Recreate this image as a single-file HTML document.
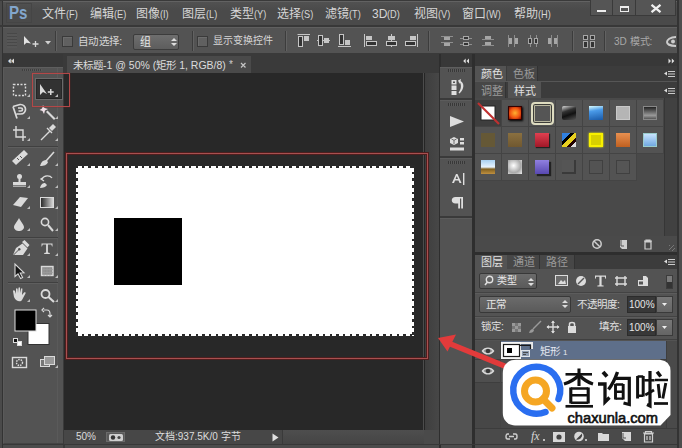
<!DOCTYPE html>
<html lang="zh-CN">
<head>
<meta charset="utf-8">
<style>
*{margin:0;padding:0;box-sizing:border-box}
html,body{width:682px;height:448px;overflow:hidden;background:#4c4c4c}
body{position:relative;font-family:"Liberation Sans",sans-serif;color:#d6d6d6;font-size:12px}
.a{position:absolute}
.t{position:absolute;white-space:nowrap;line-height:1}
</style>
</head>
<body>
<!-- frame -->

<div class="a" style="left:0;top:0;width:2px;height:448px;background:#4a4a4a"></div><div class="a" style="left:2px;top:0;width:1px;height:448px;background:#333"></div>
<!-- menu bar -->
<div class="a" style="left:3px;top:1px;width:674px;height:24px;background:linear-gradient(#525252,#4a4a4a 40%)"></div>
<div class="a" style="left:0;top:0;width:682px;height:1px;background:#3a3a3a"></div>
<div class="a" style="left:3px;top:1px;width:674px;height:1px;background:#626262"></div>
<div class="a" style="left:0;top:25px;width:682px;height:2px;background:#383838"></div>
<svg class="a" style="left:0;top:0" width="40" height="26"><rect x="6.5" y="3.5" width="25" height="19" fill="none" stroke="#454545"/><text x="9" y="19" font-family="Liberation Sans" font-weight="bold" font-size="17.5" fill="#82a6cc" textLength="18.5" lengthAdjust="spacingAndGlyphs">Ps</text></svg>
<div class="t" style="left:42px;top:8px">文件<span style="display:inline-block;font-size:11.5px;transform:scaleX(.8);transform-origin:0 50%;margin-right:-3px">(F)</span></div>
<div class="t" style="left:90px;top:8px">编辑<span style="display:inline-block;font-size:11.5px;transform:scaleX(.8);transform-origin:0 50%;margin-right:-3px">(E)</span></div>
<div class="t" style="left:136px;top:8px">图像<span style="display:inline-block;font-size:11.5px;transform:scaleX(.8);transform-origin:0 50%;margin-right:-3px">(I)</span></div>
<div class="t" style="left:182px;top:8px">图层<span style="display:inline-block;font-size:11.5px;transform:scaleX(.8);transform-origin:0 50%;margin-right:-3px">(L)</span></div>
<div class="t" style="left:230px;top:8px">类型<span style="display:inline-block;font-size:11.5px;transform:scaleX(.8);transform-origin:0 50%;margin-right:-3px">(Y)</span></div>
<div class="t" style="left:277px;top:8px">选择<span style="display:inline-block;font-size:11.5px;transform:scaleX(.8);transform-origin:0 50%;margin-right:-3px">(S)</span></div>
<div class="t" style="left:325px;top:8px">滤镜<span style="display:inline-block;font-size:11.5px;transform:scaleX(.8);transform-origin:0 50%;margin-right:-3px">(T)</span></div>
<div class="t" style="left:372px;top:8px">3D<span style="display:inline-block;font-size:11.5px;transform:scaleX(.8);transform-origin:0 50%;margin-right:-3px">(D)</span></div>
<div class="t" style="left:414px;top:8px">视图<span style="display:inline-block;font-size:11.5px;transform:scaleX(.8);transform-origin:0 50%;margin-right:-3px">(V)</span></div>
<div class="t" style="left:462px;top:8px">窗口<span style="display:inline-block;font-size:11.5px;transform:scaleX(.8);transform-origin:0 50%;margin-right:-3px">(W)</span></div>
<div class="t" style="left:514px;top:8px">帮助<span style="display:inline-block;font-size:11.5px;transform:scaleX(.8);transform-origin:0 50%;margin-right:-3px">(H)</span></div>
<!-- window buttons -->
<div class="a" style="left:590px;top:0;width:23px;height:16px;background:#555;border:1px solid #3a3a3a;border-top:0"></div>
<div class="a" style="left:613px;top:0;width:23px;height:16px;background:#555;border:1px solid #3a3a3a;border-top:0;border-left:0"></div>
<div class="a" style="left:636px;top:0;width:40px;height:16px;background:#555;border:1px solid #3a3a3a;border-top:0;border-left:0"></div>
<div class="a" style="left:597px;top:10px;width:9px;height:2px;background:#eee"></div>
<div class="a" style="left:620px;top:6px;width:9px;height:6px;border:1px solid #eee;border-top-width:2px"></div>
<svg class="a" style="left:650px;top:4px" width="12" height="9"><path d="M1.5 0.8 L10.5 8.2 M10.5 0.8 L1.5 8.2" stroke="#f0f0f0" stroke-width="2.2"/></svg>
<div class="a" style="left:677px;top:0;width:2px;height:448px;background:#333"></div><div class="a" style="left:679px;top:0;width:3px;height:448px;background:#4d4d4d"></div>

<!-- options bar -->
<div class="a" style="left:3px;top:27px;width:674px;height:27px;background:#535353;border-top:1px solid #606060;border-bottom:1px solid #3a3a3a"></div>
<div id="opt">
<div class="a" style="left:7px;top:33px;width:10px;height:15px;background:repeating-linear-gradient(#474747 0 1px,#575757 1px 3px);opacity:.9"></div>
<svg class="a" style="left:23px;top:35px" width="18" height="12" viewBox="0 0 18 12"><path d="M1 1 L1 10 L3.5 7.8 L8 8.5 Z" fill="#e2e2e2"/><path d="M12.5 6 V12 M9.5 9 H15.5" stroke="#d8d8d8" stroke-width="1.3"/></svg>
<svg class="a" style="left:45px;top:41px" width="7" height="4"><path d="M0 0 H6 L3 3.5Z" fill="#d0d0d0"/></svg>
<div class="a" style="left:55px;top:31px;width:1px;height:20px;background:#3c3c3c;box-shadow:1px 0 #626262"></div>
<div class="a" style="left:62px;top:36px;width:11px;height:11px;background:#606060;border:1px solid #3a3a3a;box-shadow:inset 1px 1px #6c6c6c"></div>
<div class="t" style="left:78px;top:36px;font-size:10.5px;letter-spacing:0.3px">自动选择:</div>
<div class="a" style="left:133px;top:34px;width:46px;height:16px;background:linear-gradient(#6e6e6e,#5d5d5d);border:1px solid #3c3c3c;border-radius:2px"></div>
<div class="t" style="left:140px;top:37px;font-size:11px;color:#e8e8e8">组</div>
<svg class="a" style="left:171px;top:37px" width="6" height="10"><path d="M0 4 L3 1 L6 4Z M0 6 L3 9 L6 6Z" fill="#ddd"/></svg>
<div class="a" style="left:192px;top:31px;width:1px;height:20px;background:#3c3c3c;box-shadow:1px 0 #626262"></div>
<div class="a" style="left:197px;top:36px;width:11px;height:11px;background:#606060;border:1px solid #3a3a3a;box-shadow:inset 1px 1px #6c6c6c"></div>
<div class="t" style="left:213px;top:36px;font-size:10px">显示变换控件</div>
<div class="a" style="left:285px;top:31px;width:1px;height:20px;background:#3c3c3c;box-shadow:1px 0 #626262"></div>
<svg class="a" style="left:297px;top:34px" width="14" height="14" viewBox="0 0 14 14"><path d="M0.5 0.5H13" stroke="#c6c6c6"/><rect x="1.5" y="2.5" width="4" height="10" fill="#333" stroke="#c6c6c6"/><rect x="7" y="2" width="5" height="5" fill="#c6c6c6"/></svg>
<svg class="a" style="left:317px;top:34px" width="14" height="14" viewBox="0 0 14 14"><path d="M0 6.5H13" stroke="#c6c6c6"/><rect x="1.5" y="1.5" width="4" height="10" fill="#333" stroke="#c6c6c6"/><rect x="7" y="4" width="5" height="5" fill="#c6c6c6"/></svg>
<svg class="a" style="left:338px;top:34px" width="14" height="14" viewBox="0 0 14 14"><path d="M0 12.5H13" stroke="#c6c6c6"/><rect x="1.5" y="0.5" width="4" height="10" fill="#333" stroke="#c6c6c6"/><rect x="7" y="6" width="5" height="5" fill="#c6c6c6"/></svg>
<svg class="a" style="left:364px;top:34px" width="14" height="14" viewBox="0 0 14 14"><path d="M0.5 0V13" stroke="#c6c6c6"/><rect x="2.5" y="7.5" width="10" height="4" fill="#333" stroke="#c6c6c6"/><rect x="2" y="2" width="6" height="4" fill="#c6c6c6"/></svg>
<svg class="a" style="left:385px;top:34px" width="14" height="14" viewBox="0 0 14 14"><path d="M6.5 0V13" stroke="#c6c6c6"/><rect x="1.5" y="7.5" width="10" height="4" fill="#333" stroke="#c6c6c6"/><rect x="3" y="2" width="7" height="4" fill="#c6c6c6"/></svg>
<svg class="a" style="left:405px;top:34px" width="14" height="14" viewBox="0 0 14 14"><path d="M12.5 0V13" stroke="#c6c6c6"/><rect x="0.5" y="7.5" width="10" height="4" fill="#333" stroke="#c6c6c6"/><rect x="5" y="2" width="6" height="4" fill="#c6c6c6"/></svg>
<svg class="a" style="left:440px;top:34px" width="14" height="14" viewBox="0 0 14 14"><path d="M1 2.5H13M1 8.5H13" stroke="#8e8e8e"/><rect x="4" y="3" width="6" height="3" fill="#a6a6a6"/><rect x="4" y="9" width="6" height="3" fill="#a6a6a6"/></svg>
<svg class="a" style="left:459px;top:34px" width="14" height="14" viewBox="0 0 14 14"><path d="M1 4.5H13M1 10.5H13" stroke="#8e8e8e"/><rect x="4.5" y="2.5" width="5" height="3" fill="#333" stroke="#a6a6a6"/><rect x="4.5" y="8.5" width="5" height="3" fill="#333" stroke="#a6a6a6"/></svg>
<svg class="a" style="left:481px;top:34px" width="14" height="14" viewBox="0 0 14 14"><path d="M1 5.5H13M1 11.5H13" stroke="#8e8e8e"/><rect x="4" y="2" width="6" height="3" fill="#a6a6a6"/><rect x="4" y="8" width="6" height="3" fill="#a6a6a6"/></svg>
<svg class="a" style="left:506px;top:34px" width="14" height="14" viewBox="0 0 14 14"><path d="M2.5 1V13M8.5 1V13" stroke="#8e8e8e"/><rect x="3" y="4" width="3" height="6" fill="#a6a6a6"/><rect x="9" y="4" width="3" height="6" fill="#a6a6a6"/></svg>
<svg class="a" style="left:526px;top:34px" width="14" height="14" viewBox="0 0 14 14"><path d="M4.5 1V13M10.5 1V13" stroke="#8e8e8e"/><rect x="2.5" y="4.5" width="3" height="5" fill="#333" stroke="#a6a6a6"/><rect x="8.5" y="4.5" width="3" height="5" fill="#333" stroke="#a6a6a6"/></svg>
<svg class="a" style="left:546px;top:34px" width="14" height="14" viewBox="0 0 14 14"><path d="M5.5 1V13M11.5 1V13" stroke="#8e8e8e"/><rect x="2" y="4" width="3" height="6" fill="#a6a6a6"/><rect x="8" y="4" width="3" height="6" fill="#a6a6a6"/></svg>
<svg class="a" style="left:582px;top:34px" width="14" height="14" viewBox="0 0 14 14"><rect x="1.5" y="1.5" width="4" height="4" fill="#333" stroke="#a6a6a6"/><rect x="8.5" y="1.5" width="4" height="4" fill="#333" stroke="#a6a6a6"/><rect x="1.5" y="7.5" width="4" height="6" fill="#333" stroke="#a6a6a6"/><rect x="8.5" y="7.5" width="4" height="6" fill="#333" stroke="#a6a6a6"/></svg>
<div class="a" style="left:428px;top:31px;width:1px;height:20px;background:#3c3c3c;box-shadow:1px 0 #626262"></div>
<div class="a" style="left:572px;top:31px;width:1px;height:20px;background:#3c3c3c;box-shadow:1px 0 #626262"></div>
<div class="a" style="left:604px;top:31px;width:1px;height:20px;background:#3c3c3c;box-shadow:1px 0 #626262"></div>
<div class="t" style="left:614px;top:37px;font-size:10px;color:#a8a8a8">3D 模式:</div>
<svg class="a" style="left:666px;top:36px" width="11" height="11"><path d="M10 1 C4 1 1 4 1 6 C1 8 4 10 10 10" stroke="#ccc" stroke-width="2" fill="none"/><circle cx="7" cy="5.5" r="2" fill="#ccc"/></svg>
</div>

<!-- dark strip under options -->
<div class="a" style="left:3px;top:54px;width:674px;height:13px;background:#383838"></div>

<!-- tools panel -->
<div class="a" style="left:3px;top:67px;width:60px;height:377px;background:#535353;border-left:1px solid #5a5a5a;border-top:1px solid #5e5e5e;border-bottom:1px solid #444"></div>
<div class="a" style="left:57px;top:68px;width:1px;height:375px;background:#5a5a5a"></div>
<div class="a" style="left:63px;top:54px;width:2px;height:394px;background:#3a3a3a"></div>
<div class="t" style="left:8px;top:57px;font-size:9px;color:#bbb">«</div>
<div id="tools">
<!-- header grip -->
<div class="a" style="left:22px;top:69px;width:20px;height:2px;background:repeating-linear-gradient(90deg,#3f3f3f 0 1px,#5a5a5a 1px 2px)"></div>
<!-- separators -->
<div class="a" style="left:8px;top:146px;width:50px;height:1px;background:#404040;box-shadow:0 1px #5e5e5e"></div>
<div class="a" style="left:8px;top:237px;width:50px;height:1px;background:#404040;box-shadow:0 1px #5e5e5e"></div>
<div class="a" style="left:8px;top:282px;width:50px;height:1px;background:#404040;box-shadow:0 1px #5e5e5e"></div>
<!-- selected move button -->
<div class="a" style="left:35px;top:78px;width:28px;height:22px;background:#323232;border:1px solid #6a6a6a;box-shadow:inset 0 0 0 1px #262626"></div>
<svg class="a" style="left:0;top:67px" width="64" height="310" viewBox="0 67 64 310">
<g fill="none" stroke="#dadada" stroke-width="1.4">
 <!-- marquee -->
 <rect x="13.5" y="84.5" width="12" height="11" stroke-dasharray="2 1.5"/>
 <!-- lasso -->
 <path d="M13 106.5 L20 104.5 C27 104 27.5 114 20.5 114 L16.5 114 M13 106.5 L17 118.5 M18 108 H21 C23 108 23 111 21 111 H18.5" stroke-width="1.7"/>
 <!-- crop -->
 <path d="M16 126 V137 H26 M13 130 H23 V141"/>
 <!-- eyedropper -->
 <path d="M41 140 L50 131 M47 128 L52 133"/>
 <!-- brush -->
 <path d="M54 152 L46 161" stroke-width="1.6"/>
 <!-- history brush swirl -->
 <path d="M42 179 C44 175 50 175 52 178 M44 177 L41 179 L44 181" stroke-width="1.3"/>
 <!-- dodge -->
 <circle cx="45" cy="222" r="3.6" stroke-width="1.6"/>
 <path d="M48 225 L53 231" stroke-width="2"/>
 <!-- pen -->
 <!-- path selection arrow -->
 <!-- zoom -->
 <circle cx="45.5" cy="294" r="4" stroke-width="1.8"/>
 <path d="M48.5 297 L54 302" stroke-width="2.2"/>
 <!-- quick mask -->
 <rect x="12.5" y="357.5" width="14" height="10"/>
 <circle cx="19.5" cy="362.5" r="3" stroke-dasharray="1.5 1"/>
</g>
<g fill="#dadada">
 <!-- move arrow -->
 <path d="M40 84 L40 95 L43 92 L47 94 Z"/>
 <path d="M50 89 h1.5 v2.2 h2.2 v1.5 h-2.2 v2.2 h-1.5 v-2.2 h-2.2 v-1.5 h2.2z"/>
 <!-- magic wand -->
 <path d="M43 105 L44.5 108 L48 109 L45 110.5 L44 114 L42.5 111 L39.5 110 L42 108.5Z" fill="#f0e0e8"/>
 <path d="M46 112 L54 120 L55.5 118.5 L47.5 110.5Z"/>
 <!-- eyedropper tip -->
 <path d="M49 128 L53 124 L56 127 L52 131Z"/>
 <!-- healing bandage -->
 <path d="M12 161 L24 150 L28 154 L16 165 Z"/>
 <!-- brush head -->
 <path d="M40 166 C41 162 43 160 46 160 L48 162 C47 165 44 166 40 166Z"/>
 <!-- stamp -->
 <circle cx="19.5" cy="176.5" r="2.5"/>
 <rect x="18.5" y="178" width="2" height="4"/>
 <rect x="13" y="182" width="13" height="3"/>
 <rect x="13" y="185.5" width="13" height="1.5" fill="#aaa"/>
 <!-- history brush head -->
 <path d="M53 178 L46 186 M40 188 C41 184 43 183 45 183 L47 185 C46 187 43 188 40 188Z"/>
 <!-- eraser -->
 <path d="M13 205 L20 197 L28 198 L21 207 Z" />
 <!-- drop -->
 <path d="M19 218 C17 222 14 225 14 227 C14 229.5 16.5 231 19 231 C21.5 231 24 229.5 24 227 C24 225 21 222 19 218Z"/>
 <!-- type T -->
 <path d="M41.5 243.5 H52.5 V246.5 H52 L51.3 244.6 H47.9 V252.6 L49.8 253 V254 H44.2 V253 L46.1 252.6 V244.6 H42.7 L42 246.5 H41.5Z"/>
 <path d="M13 255 L16 248 L22.5 243.5 L27.5 248.5 L23 255 Z"/>
 <path d="M22 242 L24.5 240 L29.5 245 L27.5 247.5Z"/>
 <!-- hand -->
 <path d="M14 297 L13 291 C13 290 14.5 290 15 291 L16 294 L16 289 C16 288 17.5 288 17.6 289 L18 293 L18.5 288 C18.6 287 20 287 20 288 L20.2 293 L21 289 C21.2 288 22.5 288 22.4 289 L22 295 L24 292.5 C25 292 26 292.5 25.5 293.5 L22 300 C21 302 16 302 14 297Z"/>
 <!-- default colors -->
 <rect x="13" y="338" width="5" height="5" fill="#ddd"/>
 <rect x="14" y="339" width="3" height="3" fill="#111"/>
 <rect x="17" y="341" width="5" height="5" fill="#ddd"/>
 <rect x="18" y="342" width="3" height="3" fill="#fff"/>
</g>
<g stroke="#dadada" stroke-width="1.2" fill="none">
 <path d="M44 310 L47 310 C49 310 50 311 50 314 L50 317 M48 315 L50 317 L52 315 M44 308 L42 310 L44 312"/>
</g>
<!-- brush strokes inner -->
<path d="M17 158 L19 160 M20 156 L22 158" stroke="#535353" stroke-width="1"/>
<!-- gradient -->
<defs><linearGradient id="gr" x1="0" x2="1"><stop offset="0" stop-color="#222"/><stop offset="1" stop-color="#ddd"/></linearGradient></defs>
<rect x="40.5" y="197.5" width="13" height="10" fill="url(#gr)" stroke="#dadada"/>
<path d="M13.5 255 L19 249.5" stroke="#535353" stroke-width="1"/><circle cx="19.3" cy="249.3" r="1.2" fill="#535353"/>
<path d="M15 264 V276.5 L18 273.8 L20.6 278.5 L22.6 277.5 L20.2 273 L24 272.8 Z" fill="#151515" stroke="#dadada" stroke-width="1.1"/>
<!-- rect tool -->
<rect x="41.5" y="266.5" width="11.5" height="9" fill="#8e8e8e" stroke="#dadada" stroke-width="1.4"/><path d="M44 267 V276 M47 267 V276 M50 267 V276 M42 269.5 H53 M42 272.5 H53" stroke="#9e9e9e" stroke-width="0.7"/>
<!-- screen mode -->
<rect x="40.5" y="359.5" width="9" height="7" fill="#777" stroke="#dadada"/>
<rect x="44.5" y="356.5" width="10" height="8" fill="#999" stroke="#dadada"/>
<!-- colors -->
<rect x="28" y="323.5" width="21" height="21" fill="#fff" stroke="#333"/>
<rect x="15" y="310" width="21" height="21" fill="#000" stroke="#ddd"/>
<!-- small corner triangles -->
<g fill="#bdbdbd">
 <path d="M27 97 h3 v-3z"/>
 <path d="M55 97 h3 v-3z"/>
 <path d="M27 119 h3 v-3z"/>
 <path d="M55 119 h3 v-3z"/>
 <path d="M27 141 h3 v-3z"/>
 <path d="M55 141 h3 v-3z"/>
 <path d="M27 166 h3 v-3z"/>
 <path d="M55 166 h3 v-3z"/>
 <path d="M27 188 h3 v-3z"/>
 <path d="M55 188 h3 v-3z"/>
 <path d="M27 209 h3 v-3z"/>
 <path d="M55 209 h3 v-3z"/>
 <path d="M27 231 h3 v-3z"/>
 <path d="M55 231 h3 v-3z"/>
 <path d="M27 256 h3 v-3z"/>
 <path d="M55 256 h3 v-3z"/>
 <path d="M27 278 h3 v-3z"/>
 <path d="M55 278 h3 v-3z"/>
 <path d="M27 302 h3 v-3z"/>
 <path d="M55 302 h3 v-3z"/>
 <path d="M55 368 h3 v-3z"/>
</g>
</svg>
</div>

<!-- canvas area -->
<div class="a" style="left:64px;top:54px;width:375px;height:19px;background:#3a3a3a"></div>
<div class="a" style="left:67px;top:56px;width:184px;height:17px;background:#4a4a4a"></div>
<div class="t" style="left:73px;top:60px;font-size:10.5px;color:#dcdcdc">未标题-1 @ 50% (矩形 1, RGB/8)</div>
<div class="t" style="left:229px;top:60px;font-size:10px;color:#cfcfcf">*</div>
<svg class="a" style="left:240px;top:62px" width="7" height="7"><path d="M1 1L5.5 5.5M5.5 1L1 5.5" stroke="#c4c4c4" stroke-width="1.2"/></svg>
<div class="a" style="left:64px;top:73px;width:359px;height:357px;background:#282828"></div>
<div class="a" style="left:424px;top:73px;width:15px;height:357px;background:linear-gradient(90deg,#3e3e3e,#474747);border-left:1px solid #252525"></div>
<div class="a" style="left:424px;top:430px;width:15px;height:14px;background:#4a4a4a"></div>
<div class="a" style="left:439px;top:54px;width:2px;height:394px;background:#2e2e2e"></div>
<!-- status bar -->
<div class="a" style="left:64px;top:430px;width:360px;height:14px;background:#474747"></div>
<div class="a" style="left:282px;top:430px;width:142px;height:14px;background:linear-gradient(#4e4e4e,#454545);border-left:1px solid #3a3a3a"></div>
<div class="a" style="left:106px;top:432px;width:19px;height:10px;background:#595959;border:1px solid #6a6a6a"></div>
<svg class="a" style="left:108px;top:433px" width="16" height="9"><rect x="1" y="1" width="14" height="7" rx="1.5" fill="#cfcfcf"/><circle cx="5" cy="4.5" r="2.2" fill="#333"/><circle cx="11" cy="4.5" r="1.6" fill="#444"/></svg>
<svg class="a" style="left:272px;top:433px" width="7" height="9"><path d="M0.5 0.5 L6.5 4.5 L0.5 8.5Z" fill="#e0e0e0"/></svg>
<div class="t" style="left:76px;top:432px;font-size:10px;color:#ddd">50%</div>
<div class="t" style="left:155px;top:432px;font-size:10px;color:#ddd">文档:937.5K/0 字节</div>

<!-- canvas -->
<div class="a" style="left:76px;top:166px;width:338px;height:170px;background:#fff"></div>
<div class="a" style="left:75px;top:165px;width:340px;height:3px;background:repeating-linear-gradient(90deg,#2a2a2a 0 2.5px,transparent 2.5px 6.7px)"></div>
<div class="a" style="left:75px;top:334px;width:340px;height:3px;background:repeating-linear-gradient(90deg,#2a2a2a 0 2.5px,transparent 2.5px 6.7px)"></div>
<div class="a" style="left:75px;top:165px;width:3px;height:172px;background:repeating-linear-gradient(180deg,#2a2a2a 0 2.5px,transparent 2.5px 6.7px)"></div>
<div class="a" style="left:412px;top:165px;width:3px;height:172px;background:repeating-linear-gradient(180deg,#2a2a2a 0 2.5px,transparent 2.5px 6.7px)"></div>
<div class="a" style="left:114px;top:218px;width:68px;height:67px;background:#000"></div>
<div class="a" style="left:66px;top:153px;width:362px;height:206px;border:1px solid #a85050;box-shadow:0 0 0 1px #4e1e1e,inset 0 0 0 1px #4e1e1e"></div>

<!-- narrow panel column -->
<div class="a" style="left:440px;top:67px;width:33px;height:377px;background:#535353;border-top:1px solid #5e5e5e"></div>
<div class="a" style="left:440px;top:98px;width:33px;height:2px;background:#3a3a3a;box-shadow:0 1px #5c5c5c"></div>
<div class="a" style="left:440px;top:156px;width:33px;height:2px;background:#3a3a3a;box-shadow:0 1px #5c5c5c"></div>
<div class="a" style="left:440px;top:216px;width:33px;height:2px;background:#3a3a3a;box-shadow:0 1px #5c5c5c"></div>
<div class="a" style="left:448px;top:69px;width:17px;height:3px;background:repeating-linear-gradient(90deg,#383838 0 1px,#5a5a5a 1px 2px)"></div>
<div class="a" style="left:448px;top:103px;width:17px;height:3px;background:repeating-linear-gradient(90deg,#383838 0 1px,#5a5a5a 1px 2px)"></div>
<div class="a" style="left:448px;top:161px;width:17px;height:3px;background:repeating-linear-gradient(90deg,#383838 0 1px,#5a5a5a 1px 2px)"></div>
<div class="a" style="left:472px;top:54px;width:3px;height:394px;background:#2e2e2e"></div>
<svg class="a" style="left:440px;top:67px" width="33" height="145" viewBox="440 67 33 145">
 <g fill="#dedede">
  <rect x="451.5" y="80" width="5" height="4.5"/><rect x="453" y="81.5" width="2" height="1.5" fill="#535353"/><rect x="453" y="87" width="2" height="1.5" fill="#535353"/><rect x="451.5" y="85.5" width="5" height="4.5"/><rect x="451.5" y="91" width="5" height="4"/>
  <path d="M458 80.5 L461 79 L460.6 81 C464.5 83 464.5 89 459.5 93.5 L458.5 92.8 C461.5 89 461.5 84.5 459.8 82.5 L459.5 84Z"/>
  <path d="M450 116 L464 121.5 L450 127Z"/>
  <path d="M454 137 L458 139 V143 L454 145 L450 143 V139Z"/>
  <rect x="460" y="138" width="4" height="2.5"/><rect x="460" y="142" width="4" height="2.5"/>
  <rect x="450" y="147.5" width="14" height="3"/>
  <path d="M452 183 L456 174 H457.5 L461.5 183 H459.5 L458.5 180.5 H455 L454 183Z M455.6 179 H458 L456.8 176Z"/>
  <rect x="463" y="173" width="1.4" height="12"/>
  <path d="M455.5 197 H463 V208.5 H461.2 V198.6 H460 V208.5 H458.2 V203.5 H455.5 C450.5 203.5 450.5 197 455.5 197Z"/>
 </g>
 <path d="M451.5 139 L454 140.3 L456.5 139 M454 140.3 V144" stroke="#555" stroke-width="0.8" fill="none"/>
</svg>


<!-- right panels -->
<div class="a" style="left:475px;top:66px;width:202px;height:378px;background:#535353"></div>
<div class="a" style="left:475px;top:66px;width:202px;height:15px;background:#3c3c3c"></div>
<div class="a" style="left:475px;top:66px;width:31px;height:15px;background:#535353"></div>
<div class="a" style="left:507px;top:66px;width:31px;height:15px;background:#474747;border-right:1px solid #333"></div>
<div class="t" style="left:481px;top:69px;font-size:11px;color:#e0e0e0">颜色</div>
<div class="t" style="left:513px;top:69px;font-size:11px;color:#9a9a9a">色板</div>
<div class="a" style="left:475px;top:81px;width:202px;height:1px;background:#565656"></div>
<div class="a" style="left:475px;top:82px;width:202px;height:16px;background:#3c3c3c"></div>
<div class="a" style="left:475px;top:82px;width:31px;height:16px;background:#474747;border-right:1px solid #333"></div>
<div class="a" style="left:508px;top:82px;width:33px;height:16px;background:#535353"></div>
<div class="t" style="left:481px;top:86px;font-size:11px;color:#9a9a9a">调整</div>
<div class="t" style="left:514px;top:86px;font-size:11px;color:#e0e0e0">样式</div>

<div id="styles">
<div class="a" style="left:475px;top:98px;width:202px;height:138px;background:#494949"></div>
<div class="a" style="left:664px;top:98px;width:13px;height:138px;background:#414141;border-left:1px solid #363636"></div>
<div class="a" style="left:475px;top:100px;width:27px;height:27px;background:#3e3e3e;border-right:1px solid #444;border-bottom:1px solid #444"></div>
<div class="a" style="left:502px;top:100px;width:27px;height:27px;background:#535353;border-right:1px solid #444;border-bottom:1px solid #444"></div>
<div class="a" style="left:529px;top:100px;width:27px;height:27px;background:#535353;border-right:1px solid #444;border-bottom:1px solid #444"></div>
<div class="a" style="left:556px;top:100px;width:27px;height:27px;background:#535353;border-right:1px solid #444;border-bottom:1px solid #444"></div>
<div class="a" style="left:583px;top:100px;width:27px;height:27px;background:#535353;border-right:1px solid #444;border-bottom:1px solid #444"></div>
<div class="a" style="left:610px;top:100px;width:27px;height:27px;background:#535353;border-right:1px solid #444;border-bottom:1px solid #444"></div>
<div class="a" style="left:637px;top:100px;width:27px;height:27px;background:#535353;border-right:1px solid #444;border-bottom:1px solid #444"></div>
<div class="a" style="left:475px;top:127px;width:27px;height:27px;background:#535353;border-right:1px solid #444;border-bottom:1px solid #444"></div>
<div class="a" style="left:502px;top:127px;width:27px;height:27px;background:#535353;border-right:1px solid #444;border-bottom:1px solid #444"></div>
<div class="a" style="left:529px;top:127px;width:27px;height:27px;background:#535353;border-right:1px solid #444;border-bottom:1px solid #444"></div>
<div class="a" style="left:556px;top:127px;width:27px;height:27px;background:#535353;border-right:1px solid #444;border-bottom:1px solid #444"></div>
<div class="a" style="left:583px;top:127px;width:27px;height:27px;background:#535353;border-right:1px solid #444;border-bottom:1px solid #444"></div>
<div class="a" style="left:610px;top:127px;width:27px;height:27px;background:#535353;border-right:1px solid #444;border-bottom:1px solid #444"></div>
<div class="a" style="left:637px;top:127px;width:27px;height:27px;background:#535353;border-right:1px solid #444;border-bottom:1px solid #444"></div>
<div class="a" style="left:475px;top:154px;width:27px;height:27px;background:#535353;border-right:1px solid #444;border-bottom:1px solid #444"></div>
<div class="a" style="left:502px;top:154px;width:27px;height:27px;background:#535353;border-right:1px solid #444;border-bottom:1px solid #444"></div>
<div class="a" style="left:529px;top:154px;width:27px;height:27px;background:#535353;border-right:1px solid #444;border-bottom:1px solid #444"></div>
<div class="a" style="left:556px;top:154px;width:27px;height:27px;background:#535353;border-right:1px solid #444;border-bottom:1px solid #444"></div>
<div class="a" style="left:583px;top:154px;width:27px;height:27px;background:#535353;border-right:1px solid #444;border-bottom:1px solid #444"></div>
<div class="a" style="left:610px;top:154px;width:27px;height:27px;background:#535353;border-right:1px solid #444;border-bottom:1px solid #444"></div>
<svg class="a" style="left:475px;top:100px" width="27" height="27"><rect x="6" y="6" width="14" height="14" fill="#fff" stroke="#222"/><path d="M3 3 L24 24" stroke="#c03030" stroke-width="2.2"/></svg>
<div class="a" style="left:508px;top:106px;width:14px;height:14px;background:radial-gradient(circle,#ffb030 0,#f05010 60%,#801000 100%);border:1px solid #300;box-shadow:1px 1px 2px #000"></div>
<div class="a" style="left:531px;top:102px;width:23px;height:23px;border:2px solid #dedcc0;border-radius:4px;background:#555;box-shadow:inset 0 0 0 1px #3c3c38,inset 0 0 0 2px #b8b69e"></div>
<div class="a" style="left:562px;top:106px;width:14px;height:14px;background:linear-gradient(160deg,#ddd 0,#333 35%,#111 60%,#555 100%);border-radius:2px"></div>
<div class="a" style="left:589px;top:106px;width:14px;height:14px;background:linear-gradient(170deg,#dff 0,#4a9ae8 35%,#1a5aa8 100%)"></div>
<div class="a" style="left:616px;top:106px;width:14px;height:14px;background:#b5b5b5;border:1px solid #c8c8c8"></div>
<div class="a" style="left:643px;top:106px;width:14px;height:14px;background:linear-gradient(#222,#999 70%,#555);border:1px solid #888"></div>
<div class="a" style="left:481px;top:133px;width:14px;height:14px;background:#6a5a30;opacity:.8"></div>
<div class="a" style="left:508px;top:133px;width:14px;height:14px;background:linear-gradient(#8a7040,#705830)"></div>
<div class="a" style="left:535px;top:133px;width:14px;height:14px;background:linear-gradient(#e04050,#a01828);box-shadow:1px 1px 1px #222"></div>
<div class="a" style="left:562px;top:133px;width:14px;height:14px;background:linear-gradient(135deg,#3080e0 0 30%,#000 30% 45%,#e8d020 45% 65%,#200 65% 80%,#ddd 80%)"></div>
<div class="a" style="left:589px;top:133px;width:14px;height:14px;background:#d8d000;border:2px solid #f8f000;box-shadow:0 0 2px #ff0"></div>
<div class="a" style="left:616px;top:133px;width:14px;height:14px;background:linear-gradient(#e89050,#c06020)"></div>
<div class="a" style="left:643px;top:133px;width:14px;height:14px;background:linear-gradient(#c8e4ff,#70a8e0);border:1px solid #9cc"></div>
<div class="a" style="left:481px;top:160px;width:14px;height:14px;background:linear-gradient(#a8d0f0 0,#e8f4ff 50%,#806020 65%,#c09040 100%)"></div>
<div class="a" style="left:508px;top:160px;width:14px;height:14px;background:radial-gradient(circle at 40% 40%,#fff,#aaa 60%,#eee);"></div>
<div class="a" style="left:535px;top:160px;width:14px;height:14px;background:linear-gradient(#9080e0,#5848b0);box-shadow:2px 2px 1px #222"></div>
<div class="a" style="left:562px;top:160px;width:14px;height:14px;background:#555;border-right:2px solid #3a3a3a;border-bottom:2px solid #3a3a3a"></div>
<div class="a" style="left:589px;top:160px;width:14px;height:14px;background:#535353;border:1px solid #404040"></div>
<div class="a" style="left:616px;top:160px;width:14px;height:14px;background:#555;border:1px solid #404040"></div>
</div>

<div class="a" style="left:475px;top:236px;width:202px;height:16px;background:#4a4a4a"></div>
<div class="a" style="left:475px;top:252px;width:202px;height:3px;background:#2e2e2e"></div>
<div class="a" style="left:475px;top:255px;width:202px;height:14px;background:#3c3c3c"></div>
<div class="a" style="left:475px;top:255px;width:32px;height:14px;background:#535353"></div>
<div class="a" style="left:507px;top:255px;width:33px;height:14px;background:#474747;border-right:1px solid #333"></div>
<div class="a" style="left:540px;top:255px;width:35px;height:14px;background:#474747;border-right:1px solid #333"></div>
<div class="t" style="left:481px;top:257px;font-size:11px;color:#e0e0e0">图层</div>
<div class="t" style="left:513px;top:257px;font-size:11px;color:#9a9a9a">通道</div>
<div class="t" style="left:546px;top:257px;font-size:11px;color:#9a9a9a">路径</div>

<div id="layers">
<!-- panel menu icons -->
<svg class="a" style="left:664px;top:70px" width="12" height="8"><path d="M0 3.5 L3 1.5 V5.5Z" fill="#ddd"/><path d="M4 1.5H11M4 4H11M4 6.5H11" stroke="#ccc" stroke-width="1"/></svg>
<svg class="a" style="left:664px;top:87px" width="12" height="8"><path d="M0 3.5 L3 1.5 V5.5Z" fill="#ddd"/><path d="M4 1.5H11M4 4H11M4 6.5H11" stroke="#ccc" stroke-width="1"/></svg>
<svg class="a" style="left:664px;top:258px" width="12" height="8"><path d="M0 3.5 L3 1.5 V5.5Z" fill="#ddd"/><path d="M4 1.5H11M4 4H11M4 6.5H11" stroke="#ccc" stroke-width="1"/></svg>
<!-- >> and << -->
<svg class="a" style="left:668px;top:58px" width="7" height="6"><path d="M0.5 0.5 L3 3 L0.5 5.5Z M3.8 0.5 L6.3 3 L3.8 5.5Z" fill="#e0e0e0"/></svg>
<svg class="a" style="left:463px;top:58px" width="7" height="6"><path d="M2.7 0.5 L0.2 3 L2.7 5.5Z M6 0.5 L3.5 3 L6 5.5Z" fill="#e0e0e0"/></svg>
<svg class="a" style="left:8px;top:58px" width="7" height="6"><path d="M2.7 0.5 L0.2 3 L2.7 5.5Z M6 0.5 L3.5 3 L6 5.5Z" fill="#e0e0e0"/></svg>
<!-- styles footer icons -->
<svg class="a" style="left:591px;top:238px" width="64" height="12" viewBox="0 0 64 12">
 <circle cx="6" cy="6" r="4.2" stroke="#cfcfcf" stroke-width="1.5" fill="none"/><path d="M3.2 3.2 L8.8 8.8" stroke="#cfcfcf" stroke-width="1.5"/>
 <path d="M29 2 H36 V11 H31 L29 9Z" fill="#cfcfcf"/><path d="M30 2 V8 H33" stroke="#555" fill="none"/>
 <path d="M53 3 H61 M55 3 V2 H59 V3 M54 4 H60 V11 H54Z" stroke="#cfcfcf" stroke-width="1.2" fill="none"/>
</svg>
<div class="a" style="left:669px;top:245px;width:6px;height:6px;background:repeating-linear-gradient(135deg,#777 0 1px,transparent 1px 3px)"></div>

<!-- filter row -->
<div class="a" style="left:479px;top:273px;width:58px;height:16px;background:linear-gradient(#6b6b6b,#5a5a5a);border:1px solid #383838;border-radius:2px"></div>
<svg class="a" style="left:484px;top:275px" width="10" height="11"><circle cx="5.5" cy="4.5" r="3.2" stroke="#e0e0e0" stroke-width="1.4" fill="none"/><path d="M3.5 7 L1 10" stroke="#e0e0e0" stroke-width="1.6"/></svg>
<div class="t" style="left:497px;top:276px;font-size:10px;color:#e6e6e6">类型</div>
<svg class="a" style="left:528px;top:277px" width="6" height="10"><path d="M0 4 L3 1 L6 4Z M0 6 L3 9 L6 6Z" fill="#ddd"/></svg>
<svg class="a" style="left:554px;top:274px" width="110" height="14" viewBox="0 0 110 14">
 <rect x="1.5" y="1.5" width="12" height="10" fill="#6a6a6a" stroke="#dcdcdc"/><path d="M4 10 L7 6 L9 8 L11 6 L12 10Z" fill="#dcdcdc"/>
 <circle cx="27" cy="7" r="5" fill="#dcdcdc"/><path d="M24 10 L30 4" stroke="#555" stroke-width="1.5"/>
 <path d="M41 1.5 H52 V4.8 H51.4 L50.8 2.8 H47.6 V11.2 L49.6 11.6 V12.5 H43.4 V11.6 L45.4 11.2 V2.8 H42.2 L41.6 4.8 H41Z" fill="#dcdcdc"/>
 <path d="M63 2 V12 M71 2 V12 M61 4 H73 M61 10 H73" stroke="#dcdcdc" stroke-width="1.4"/>
 <path d="M84 6 H89 V2 H92 L94 4 V12 H84Z" fill="#dcdcdc"/><rect x="85" y="7.5" width="4" height="3" fill="#555"/>
</svg>
<div class="a" style="left:666px;top:275px;width:7px;height:14px;background:linear-gradient(#7a7a7a 0 50%,#333 50%);border:1px solid #3c3c3c"></div>
<div class="a" style="left:475px;top:292px;width:202px;height:1px;background:#434343;box-shadow:0 1px #5c5c5c"></div>

<!-- blend row -->
<div class="a" style="left:479px;top:296px;width:92px;height:17px;background:linear-gradient(#6b6b6b,#5a5a5a);border:1px solid #383838;border-radius:2px"></div>
<div class="t" style="left:486px;top:299px;font-size:10.5px;color:#e6e6e6">正常</div>
<svg class="a" style="left:562px;top:299px" width="6" height="10"><path d="M0 4 L3 1 L6 4Z M0 6 L3 9 L6 6Z" fill="#ddd"/></svg>
<div class="t" style="left:577px;top:299px;font-size:10.5px;color:#e0e0e0">不透明度:</div>
<div class="a" style="left:627px;top:296px;width:29px;height:17px;background:#383838;border:1px solid #2c2c2c"></div>
<div class="t" style="left:629px;top:300px;font-size:10px;color:#e6e6e6">100%</div>
<div class="a" style="left:656px;top:296px;width:17px;height:17px;background:linear-gradient(#777,#656565);border:1px solid #3a3a3a"></div>
<svg class="a" style="left:662px;top:303px" width="5" height="3"><path d="M0 0H5L2.5 3Z" fill="#eee"/></svg>
<div class="a" style="left:475px;top:316px;width:202px;height:1px;background:#434343;box-shadow:0 1px #5c5c5c"></div>

<!-- lock row -->
<div class="t" style="left:481px;top:321px;font-size:10.5px;color:#e0e0e0">锁定:</div>
<svg class="a" style="left:510px;top:320px" width="70" height="14" viewBox="0 0 70 14">
 <rect x="2" y="3" width="9" height="9" fill="#777"/><rect x="2" y="3" width="3" height="3" fill="#999"/><rect x="8" y="3" width="3" height="3" fill="#999"/><rect x="5" y="6" width="3" height="3" fill="#999"/><rect x="2" y="9" width="3" height="3" fill="#999"/><rect x="8" y="9" width="3" height="3" fill="#999"/>
 <path d="M31 1 L23 9" stroke="#9a9a9a" stroke-width="1.5"/><path d="M19 13 C20 10 21 9 23 9 L24 10 C24 12 22 13 19 13Z" fill="#9a9a9a"/>
 <path d="M43 1 V13 M37 7 H49" stroke="#dcdcdc" stroke-width="1.4"/><path d="M41 3 L43 0.5 L45 3Z M41 11 L43 13.5 L45 11Z M39 5 L36.5 7 L39 9Z M47 5 L49.5 7 L47 9Z" fill="#dcdcdc"/>
 <path d="M59.5 6 V4 C59.5 2 64.5 2 64.5 4 V6" stroke="#dcdcdc" stroke-width="1.5" fill="none"/><rect x="58" y="6" width="8" height="7" fill="#dcdcdc"/>
</svg>
<div class="t" style="left:599px;top:321px;font-size:10.5px;color:#e0e0e0">填充:</div>
<div class="a" style="left:627px;top:319px;width:29px;height:17px;background:#383838;border:1px solid #2c2c2c"></div>
<div class="t" style="left:629px;top:323px;font-size:10px;color:#e6e6e6">100%</div>
<div class="a" style="left:656px;top:319px;width:17px;height:17px;background:linear-gradient(#777,#656565);border:1px solid #3a3a3a"></div>
<svg class="a" style="left:662px;top:326px" width="5" height="3"><path d="M0 0H5L2.5 3Z" fill="#eee"/></svg>
<div class="a" style="left:475px;top:339px;width:202px;height:1px;background:#404040"></div>

<!-- layers list -->
<div class="a" style="left:475px;top:341px;width:202px;height:87px;background:#474747"></div>
<div class="a" style="left:475px;top:341px;width:191px;height:41px;background:#4f4f4f"></div>
<div class="a" style="left:501px;top:341px;width:165px;height:18px;background:#5e6f8a"></div>
<div class="a" style="left:475px;top:359px;width:202px;height:1px;background:#3e3e3e"></div>
<div class="a" style="left:475px;top:382px;width:202px;height:1px;background:#3e3e3e"></div>
<div class="a" style="left:500px;top:341px;width:1px;height:87px;background:#444"></div>
<div class="a" style="left:666px;top:341px;width:11px;height:87px;background:#4a4a4a;border-left:1px solid #3e3e3e"></div>
<svg class="a" style="left:481px;top:346px" width="14" height="30" viewBox="0 0 14 30">
 <path d="M1.5 5 C4 1.3 10 1.3 12.5 5 C10 8.7 4 8.7 1.5 5Z" fill="#8a8a8a" stroke="#d8d8d8" stroke-width="1.4"/><circle cx="7" cy="5" r="2.2" fill="#3a3a3a"/>
 <path d="M1.5 25 C4 21.3 10 21.3 12.5 25 C10 28.7 4 28.7 1.5 25Z" fill="#8a8a8a" stroke="#d8d8d8" stroke-width="1.4"/><circle cx="7" cy="25" r="2.2" fill="#3a3a3a"/>
</svg>
<svg class="a" style="left:501px;top:341px" width="33" height="19" viewBox="501 341 33 19">
 <path d="M501 342 H521 V359 H501Z" fill="#f4f4f4"/>
 <path d="M521 342 H533 V349 H531 V344 H521Z" fill="#e8e8e8"/>
 <rect x="503.5" y="344.5" width="16" height="12" fill="#fff" stroke="#1a1a1a" stroke-width="1.2"/>
 <rect x="507" y="348" width="5" height="5" fill="#000"/>
 <path d="M519.5 345.3 H530.5 V349" stroke="#1a1a1a" stroke-width="1.2" fill="none"/>
 <rect x="521.5" y="350.5" width="8" height="6" fill="#8d9bb0" stroke="#e0e4ea" stroke-width="1"/>
 <path d="M523 352.5 H528 M523 354.5 H526" stroke="#333" stroke-width="0.8"/>
</svg>
<div class="t" style="left:540px;top:346px;font-size:10.5px;color:#e4e8f0">矩形 <span style="font-size:8px">1</span></div>

<!-- footer -->
<div class="a" style="left:475px;top:428px;width:202px;height:16px;background:#4a4a4a;border-top:1px solid #3c3c3c"></div>
<svg class="a" style="left:505px;top:430px" width="152" height="13" viewBox="0 0 152 13">
 <g stroke="#cfcfcf" fill="none" stroke-width="1.4">
  <path d="M4 4 H2.5 C0.5 4 0.5 9 2.5 9 H5 M8 4 H10.5 C12.5 4 12.5 9 10.5 9 H9 M4 6.5 H9"/>
 </g>
 <text x="26" y="10" font-family="Liberation Serif" font-style="italic" font-size="12" fill="#d8d8d8">fx</text>
 <rect x="38" y="9" width="2" height="2" fill="#bbb"/>
 <rect x="48" y="2" width="12" height="10" fill="#d8d8d8"/><circle cx="54" cy="7" r="2.6" fill="#444"/>
 <circle cx="74" cy="6.5" r="4.8" fill="#d8d8d8"/><path d="M71 9.5 L77 3.5 A4.8 4.8 0 0 1 71 9.5Z" fill="#444"/>
 <rect x="80" y="9" width="2" height="2" fill="#bbb"/>
 <path d="M93 3 H97 L98 4 H104 V11 H93Z" fill="#d8d8d8"/>
 <path d="M117 2 H126 V11 H120 L117 8Z" fill="#d8d8d8"/><path d="M118 3 V8 H121" stroke="#555" fill="none"/>
 <path d="M138 3 H149 M140.5 3 V1.5 H146.5 V3 M139.5 4 H147.5 V12 H139.5Z M142 6 V10 M145 6 V10" stroke="#cfcfcf" stroke-width="1.2" fill="none"/>
</svg>
</div>
<!-- red arrow -->
<svg class="a" style="left:430px;top:325px" width="90" height="60" viewBox="430 325 90 60">
 <path d="M507 367 L448 343" stroke="#e23b3b" stroke-width="5.5"/>
 <path d="M438 338 L456 334.5 L447.5 351.5Z" fill="#e23b3b"/>
</svg>
<!-- watermark -->
<svg class="a" style="left:500px;top:356px" width="175" height="74" viewBox="500 356 175 74">
 <path d="M516 359.8 H660 Q670.5 361 670.5 371 V415 L660.5 425.5 H515 C508 425.5 502.8 420 502.8 413 V373 C502.8 365 508 359.8 516 359.8Z" fill="#fff"/>
 <path d="M558.5 399 A23.5 23.5 0 1 0 545.5 412" stroke="#2a6ef0" stroke-width="6.5" fill="none" stroke-linecap="round"/>
 <circle cx="535.5" cy="391" r="11" stroke="#f5a623" stroke-width="7" fill="none"/>
 <path d="M543 399 L552 408" stroke="#f5a623" stroke-width="7" stroke-linecap="round"/>
 <g stroke="#111" fill="none" stroke-linecap="butt">
  <!-- 查 -->
  <path d="M565.5 374.3 L592 374.3" stroke-width="2.6"/>
  <path d="M579 368.5 V386" stroke-width="3.1"/>
  <path d="M578.5 375.5 C574 380 569 382.5 564 384" stroke-width="3.3"/>
  <path d="M579.5 375.5 C584 380 588 382.5 593 384" stroke-width="3.3"/>
  <path d="M570.8 387.5 V403.5 M588.2 387.5 V403.5" stroke-width="3.1"/>
  <path d="M570.8 388.5 H588.2 M570.8 395.3 H588.2 M570.8 402.8 H588.2" stroke-width="2.5"/>
  <path d="M565.5 406.3 H593" stroke-width="2.7"/>
  <!-- 询 -->
  <path d="M603 372 L607 376.5" stroke-width="3.9"/>
  <path d="M598 384 H605 V402 L609.5 397.5" stroke-width="3.3"/>
  <path d="M617.5 372 C615 379 612 385 608.5 389.5" stroke-width="3.4"/>
  <path d="M614 378.4 H629.3 V404.5 L623.5 403" stroke-width="3.2"/>
  <path d="M615.5 384 V399.5 M623.2 384 V399.5" stroke-width="2.9"/>
  <path d="M615.5 384.5 H623.2 M615.5 391.7 H623.2 M615.5 398.6 H623.2" stroke-width="2.4"/>
  <!-- 啦 -->
  <path d="M637.6 376 V398.5 M643.2 376 V396.5" stroke-width="3.0"/>
  <path d="M637.6 376.6 H643.2 M637.6 395.8 H643.2" stroke-width="2.5"/>
  <path d="M644.3 380.3 H654.6" stroke-width="2.5"/>
  <path d="M650 371 V406 L647 404.5" stroke-width="3.2"/>
  <path d="M645.3 395 L654 390" stroke-width="2.7"/>
  <path d="M657.1 371.7 L660.7 376.5" stroke-width="3.5"/>
  <path d="M655 380 H668" stroke-width="2.5"/>
  <path d="M658.2 384 L659.7 398 M665.8 383 L662.8 398.5" stroke-width="2.9"/>
  <path d="M654 403.5 H668" stroke-width="2.7"/>
 </g>
 <text x="567.5" y="422.5" font-family="Liberation Sans" font-size="14" fill="#111" stroke="#111" stroke-width="0.6" textLength="90.5" lengthAdjust="spacingAndGlyphs">chaxunla.com</text>
</svg>
<div class="a" style="left:32px;top:73px;width:38px;height:34px;border:1px solid #b34848;box-shadow:0 0 1px #802020"></div>
<div class="a" style="left:3px;top:444px;width:674px;height:1px;background:#383838"></div>
</body>
</html>
